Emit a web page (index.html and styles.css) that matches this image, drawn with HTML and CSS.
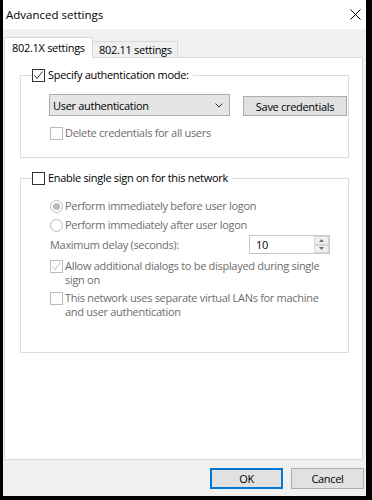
FILE: index.html
```html
<!DOCTYPE html>
<html lang="en">
<head>
<meta charset="utf-8">
<title>Advanced settings</title>
<link rel="stylesheet" href="styles.css">
</head>
<body>
<div class="window">
  <div class="titlebar">
    <span class="title">Advanced settings</span>
    <svg class="close" width="11" height="11" viewBox="0 0 11 11"><path d="M0.5 0.5 L10.5 10.5 M10.5 0.5 L0.5 10.5" stroke="#000" stroke-width="1" fill="none"/></svg>
  </div>
  <div class="tabs">
    <div class="tab active">802.1X settings</div>
    <div class="tab inactive">802.11 settings</div>
  </div>
  <div class="panel">
    <fieldset class="group g1">
      <legend>
        <span class="cb"><svg width="11" height="11" viewBox="0 0 11 11"><polyline points="1.5,5.5 4,8.5 9.5,1.5" fill="none" stroke="#333" stroke-width="1"/></svg></span>
        <span>Specify authentication mode:</span>
      </legend>
      <div class="auth-row">
        <div class="select">
          <span>User authentication</span>
          <svg width="8" height="5" viewBox="0 0 8 5"><polyline points="0.5,0.5 4,4 7.5,0.5" fill="none" stroke="#333" stroke-width="1"/></svg>
        </div>
        <button class="btn save">Save credentials</button>
      </div>
      <div class="opt dim del">
        <span class="cb dis"></span>
        <span>Delete credentials for all users</span>
      </div>
    </fieldset>

    <fieldset class="group g2">
      <legend>
        <span class="cb"></span>
        <span>Enable single sign on for this network</span>
      </legend>
      <div class="opt dim r1">
        <span class="rd on"></span>
        <span>Perform immediately before user logon</span>
      </div>
      <div class="opt dim r2">
        <span class="rd"></span>
        <span>Perform immediately after user logon</span>
      </div>
      <div class="delay dim">
        <span>Maximum delay (seconds):</span>
        <div class="spin">
          <span class="spin-val">10</span>
          <div class="spin-btns">
            <span class="spin-btn"><svg width="5" height="3" viewBox="0 0 5 3"><polygon points="2.5,0 5,3 0,3" fill="#6d6d6d"/></svg></span>
            <span class="spin-btn"><svg width="5" height="3" viewBox="0 0 5 3"><polygon points="0,0 5,0 2.5,3" fill="#6d6d6d"/></svg></span>
          </div>
        </div>
      </div>
      <div class="opt dim multi allow">
        <span class="cb dis"><svg width="11" height="11" viewBox="0 0 11 11"><polyline points="1.5,5.5 4,8.5 9.5,1.5" fill="none" stroke="#bcbcbc" stroke-width="1"/></svg></span>
        <span class="wrap">Allow additional dialogs to be displayed during single sign on</span>
      </div>
      <div class="opt dim multi network">
        <span class="cb dis"></span>
        <span class="wrap">This network uses separate virtual LANs for machine and user authentication</span>
      </div>
    </fieldset>
  </div>
  <div class="footer">
    <button class="btn ok">OK</button>
    <button class="btn">Cancel</button>
  </div>
</div>
</body>
</html>
```

FILE: styles.css
```css
html, body {
  margin: 0;
  padding: 0;
  background: #000;
}

body {
  font-family: "Open Sans", "Noto Sans", sans-serif;
  font-size: 11px;
  letter-spacing: -0.3px;
  color: #000;
}

.window {
  margin-left: 3px;
  width: 363px;
  height: 496px;
  background: #f0f0f0;
  display: flex;
  flex-direction: column;
}

.titlebar {
  height: 29px;
  flex: none;
  background: #fff;
  display: flex;
  align-items: center;
  justify-content: space-between;
  padding: 0 5px 0 3px;
  font-size: 11.5px;
  letter-spacing: 0;
}

.close {
  display: block;
}

.tabs {
  height: 28px;
  flex: none;
  display: flex;
  align-items: flex-end;
  padding-left: 1px;
}

.tab {
  box-sizing: border-box;
  border: 1px solid #d9d9d9;
  border-bottom: none;
  display: flex;
  align-items: center;
  white-space: nowrap;
}

.tab.active {
  width: 89px;
  height: 21px;
  padding: 0 0 2px 7px;
  background: #fff;
  margin-bottom: -1px;
  position: relative;
  z-index: 1;
}

.tab.inactive {
  width: 85px;
  height: 16px;
  border-left: none;
  padding-left: 6px;
  background: #f0f0f0;
}

.panel {
  flex: 1;
  margin: 0 3px 0 1px;
  background: #fff;
  border: 1px solid #d9d9d9;
  padding: 9px 13px 0 15px;
}

.group {
  margin: 0;
  padding: 0;
  border: 1px solid #dcdcdc;
  min-width: 0;
}

.g1 {
  padding-bottom: 16px;
}

.g2 {
  margin-top: 12px;
  padding-bottom: 33px;
}

legend {
  margin-left: 11px;
  padding: 0 4px 0 0;
  display: flex;
  align-items: center;
  gap: 3px;
  line-height: 16px;
}

.cb {
  width: 13px;
  height: 13px;
  box-sizing: border-box;
  border: 1px solid #333;
  background: #fff;
  flex: none;
  display: flex;
  align-items: center;
  justify-content: center;
}

.cb svg {
  display: block;
}

.cb.dis {
  border-color: #bcbcbc;
}

.rd {
  width: 13px;
  height: 13px;
  box-sizing: border-box;
  border: 1px solid #bcbcbc;
  border-radius: 50%;
  background: #fff;
  flex: none;
  display: flex;
  align-items: center;
  justify-content: center;
}

.rd.on::after {
  content: "";
  width: 7px;
  height: 7px;
  border-radius: 50%;
  background: #bcbcbc;
}

.auth-row {
  display: flex;
  align-items: flex-end;
  gap: 13px;
  margin: 11px 0 0 28px;
}

.select {
  width: 181px;
  height: 22px;
  box-sizing: border-box;
  background: #e5e5e5;
  border: 1px solid #acacac;
  display: flex;
  align-items: center;
  justify-content: space-between;
  padding: 0 6px 0 3px;
}

.select svg {
  display: block;
}

.btn {
  font: inherit;
  letter-spacing: inherit;
  color: #000;
  background: #e1e1e1;
  border: 1px solid #adadad;
  padding: 0;
  margin: 0;
  box-sizing: border-box;
}

.save {
  width: 104px;
  height: 20px;
}

.opt {
  display: flex;
  align-items: center;
  gap: 2px;
  margin-left: 29px;
  line-height: 16px;
}

.dim {
  color: #6d6d6d;
}

.del {
  margin-top: 9px;
}

.r1 {
  margin-top: 12px;
}

.r2 {
  margin-top: 3px;
}

.delay {
  display: flex;
  align-items: center;
  justify-content: space-between;
  margin: 2px 18px 0 29px;
  line-height: 16px;
}

.spin {
  width: 81px;
  height: 19px;
  box-sizing: border-box;
  border: 1px solid #c8c8c8;
  display: flex;
  align-items: stretch;
  justify-content: space-between;
  padding-left: 6px;
  background: #fff;
}

.spin-val {
  color: #000;
  align-self: center;
}

.spin-btns {
  width: 15px;
  display: flex;
  flex-direction: column;
}

.spin-btn {
  flex: 1;
  box-sizing: border-box;
  border: 1px solid #d6d6d6;
  background: #f0f0f0;
  display: flex;
  align-items: center;
  justify-content: center;
}

.spin-btn svg {
  display: block;
}

.multi {
  align-items: flex-start;
  line-height: 14px;
}

.multi .cb {
  margin-top: 1px;
}

.allow {
  margin-top: 5px;
}

.network {
  margin-top: 4px;
}

.wrap {
  max-width: 268px;
}

.footer {
  height: 36px;
  flex: none;
  box-sizing: border-box;
  display: flex;
  justify-content: flex-end;
  align-items: flex-start;
  gap: 8px;
  padding: 8px 2px 0 0;
}

.footer .btn {
  width: 73px;
  height: 21px;
}

.footer .ok {
  border: 2px solid #0078d7;
}
```
